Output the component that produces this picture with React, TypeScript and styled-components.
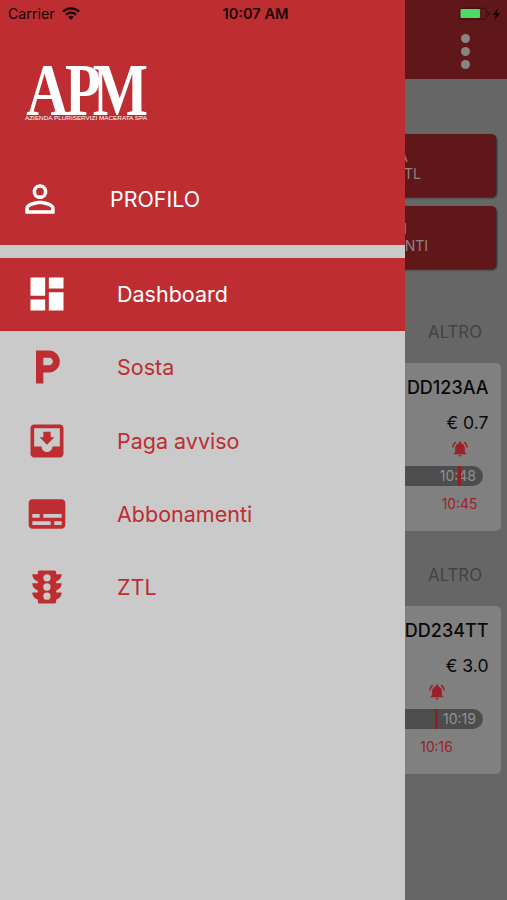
import React from 'react';
import styled, { createGlobalStyle } from 'styled-components';
import {
  MdDashboard, MdLocalParking, MdMoveToInbox,
  MdPersonOutline, MdSubtitles, MdTraffic,
} from 'react-icons/md';

const red = '#bd2d31';
const darkRed = '#5f171a';

const GlobalStyle = createGlobalStyle`
  * { box-sizing: border-box; }
  body { margin: 0; font-family: Inter, "Liberation Sans", sans-serif; background: #666; }
`;

const Screen = styled.div`
  position: relative;
  width: 507px;
  height: 900px;
  overflow: hidden;
  background: #666;
`;

const Page = styled.main`
  display: flex;
  flex-direction: column;
  height: 100%;
`;

const AppBar = styled.header`
  height: 79px;
  flex: none;
  display: flex;
  justify-content: flex-end;
  padding: 34px 37px 0 0;
  background: ${darkRed};
`;

const MoreDots = styled.div`
  display: flex;
  flex-direction: column;
  gap: 4px;
  i { width: 9px; height: 9px; border-radius: 50%; background: #888583; }
`;

const Actions = styled.section`
  display: flex;
  flex-direction: column;
  gap: 9px;
  padding: 55px 11px 0 300px;
`;

const ActionButton = styled.button`
  height: 63px;
  display: flex;
  flex-direction: column;
  align-items: flex-end;
  justify-content: center;
  padding: 0 0 1px;
  border: 0;
  border-radius: 5px;
  background: ${darkRed};
  box-shadow: 1px 1px 2px rgba(0, 0, 0, 0.65);
  color: #918383;
  font: 400 14px/17px Inter, sans-serif;
`;

const ActionLine = styled.span<{ $end: number }>`
  margin-right: ${p => p.$end}px;
`;

const SectionTitle = styled.h2<{ $top: number }>`
  margin: ${p => p.$top}px 25px 0 0;
  height: 20px;
  text-align: right;
  font-size: 16.8px;
  line-height: 20px;
  font-weight: 400;
  color: #434343;
`;

const Card = styled.article`
  width: 350px;
  height: 168px;
  margin: 21px 6px 0 auto;
  padding: 13px 12.5px 0 0;
  border-radius: 5px;
  background: #808080;
  color: #090909;
  text-align: right;
`;

const Plate = styled.div`
  font-size: 18px;
  line-height: 24px;
  font-weight: 500;
`;

const Price = styled.div`
  margin-top: 12px;
  font-size: 17.6px;
  line-height: 22px;
`;

const Marked = styled.div<{ $right: number; $top: number }>`
  display: flex;
  justify-content: center;
  width: 50px;
  height: 19px;
  margin: ${p => p.$top}px ${p => p.$right}px 0 auto;
  color: #9a2029;
  font-size: 13.8px;
  line-height: 19px;
`;

const Track = styled.div`
  position: relative;
  height: 20px;
  margin: 7px 5.5px 0 0;
  padding-right: 7px;
  border-radius: 10px;
  background: #4d4d4d;
  color: #929292;
  font-size: 14px;
  line-height: 20px;
`;

const Tick = styled.i<{ $right: number }>`
  position: absolute;
  top: 0;
  right: ${p => p.$right}px;
  width: 3px;
  height: 20px;
  background: #971b21;
`;

const Drawer = styled.aside`
  position: absolute;
  inset: 0 auto 0 0;
  width: 405px;
  background: #cacaca;
`;

const DrawerHeader = styled.header`
  height: 245px;
  padding: 61px 0 0 24px;
  background: ${red};
  color: #fff;
`;

const Logo = styled.svg`
  display: block;
  width: 126px;
  height: 61px;
  overflow: visible;
`;

const Profile = styled.div`
  display: flex;
  align-items: center;
  height: 44px;
  margin: 55px 0 0 -6.5px;
  font-size: 21.4px;
  span { margin-left: 48.5px; }
`;

const Menu = styled.nav`
  display: flex;
  flex-direction: column;
  padding-top: 13px;
`;

const MenuItem = styled.a<{ $active?: boolean }>`
  display: flex;
  align-items: center;
  height: 73.3px;
  padding: 0 0 1px 24.5px;
  background: ${p => (p.$active ? red : 'transparent')};
  color: ${p => (p.$active ? '#fff' : red)};
  font-size: 21.5px;
  line-height: 28px;
`;

const MenuLabel = styled.span`
  margin-left: 48.5px;
`;

const StatusBar = styled.div`
  position: absolute;
  inset: 0 0 auto;
  height: 27px;
  display: grid;
  grid-template-columns: 1fr auto 1fr;
  align-items: center;
  padding: 0 6px 0 8px;
  color: #180506;
  font-size: 14.2px;
`;

const Carrier = styled.div`
  display: flex;
  align-items: center;
  gap: 7px;
`;

const Clock = styled.time`
  margin-left: 2px;
  font-size: 14.6px;
  font-weight: 600;
`;

const Battery = styled.svg`
  justify-self: end;
`;

function BellRing() {
  return (
    <svg width="18" height="18" viewBox="0 0 23 24" fill="currentColor">
      <path d="M11.500 22c.14 0 .27 0 .4-.04.65-.14 1.190-.58 1.440-1.180.1-.24.16-.51.16-.78h-4a2 2 0 0 0 2 2M18 10.500c0-3.070-2.140-5.640-5-6.320V3.500a1.500 1.500 0 0 0-3 0v.68c-2.870.68-5 3.250-5 6.320V16l-2 2v1h17v-1l-2-2M19.970 10h2c-.15-3.210-1.730-6.030-4.120-7.850l-1.430 1.430C18.460 5 19.820 7.350 19.970 10M6.580 3.580L5.150 2.150C2.760 3.970 1.180 6.790 1 10h2c.18-2.650 1.540-5 3.580-6.420z" />
    </svg>
  );
}

interface Session { plate: string; price: string; end: string; alarm: string; mark: number; }

const sessions: Session[] = [
  { plate: 'DD123AA', price: '€ 0.7', end: '10:48', alarm: '10:45', mark: 4 },
  { plate: 'DD234TT', price: '€ 3.0', end: '10:19', alarm: '10:16', mark: 27 },
];

const menu = [
  { label: 'Dashboard', Icon: MdDashboard, active: true },
  { label: 'Sosta', Icon: MdLocalParking },
  { label: 'Paga avviso', Icon: MdMoveToInbox },
  { label: 'Abbonamenti', Icon: MdSubtitles },
  { label: 'ZTL', Icon: MdTraffic },
];

export default function App() {
  return (
    <Screen>
      <GlobalStyle />
      <Page>
        <AppBar><MoreDots><i /><i /><i /></MoreDots></AppBar>
        <Actions>
          <ActionButton><ActionLine $end={88}>A</ActionLine><ActionLine $end={75}>ZTL</ActionLine></ActionButton>
          <ActionButton><ActionLine $end={89}>I</ActionLine><ActionLine $end={68}>ABBONAMENTI</ActionLine></ActionButton>
        </Actions>
        {sessions.map((s, i) => (
          <React.Fragment key={s.plate}>
            <SectionTitle $top={i === 0 ? 53 : 34}>ALTRO</SectionTitle>
            <Card>
              <Plate>{s.plate}</Plate>
              <Price>{s.price}</Price>
              <Marked $right={s.mark} $top={6}><BellRing /></Marked>
              <Track>{s.end}<Tick $right={s.mark + 18} /></Track>
              <Marked $right={s.mark} $top={9}>{s.alarm}</Marked>
            </Card>
          </React.Fragment>
        ))}
      </Page>
      <Drawer>
        <DrawerHeader>
          <Logo viewBox="0 0 126 61" fill="#fff" fontFamily="Liberation Serif, serif">
            <text transform="scale(.78 1)" x="3 52.500 88" y="53.500" fontSize="75" fontWeight="700">APM</text>
            <text x="1" y="58.500" fontSize="5.800" fontFamily="Liberation Sans, sans-serif" textLength="122" lengthAdjust="spacingAndGlyphs">AZIENDA PLURISERVIZI MACERATA SPA</text>
          </Logo>
          <Profile><MdPersonOutline size={44} /><span>PROFILO</span></Profile>
        </DrawerHeader>
        <Menu>
          {menu.map(({ label, Icon, active }) => (
            <MenuItem key={label} $active={active}>
              <Icon size={44} /><MenuLabel>{label}</MenuLabel>
            </MenuItem>
          ))}
        </Menu>
      </Drawer>
      <StatusBar>
        <Carrier>
          Carrier
          <svg width="18" height="13" viewBox="0 0 18 13" fill="none" stroke="#180506" strokeWidth="2.3">
            <path d="M1 4.7a11.3 11.3 0 0 1 16 0M4 7.8a7 7 0 0 1 10 0" />
            <path d="M6.2 10a4 4 0 0 1 5.6 0L9 12.7z" fill="#180506" stroke="none" />
          </svg>
        </Carrier>
        <Clock>10:07 AM</Clock>
        <Battery width="42" height="14" viewBox="0 0 42 14">
          <rect x="0.7" y="1.2" width="27" height="11" rx="2.5" fill="none" stroke="#3b0e10" />
          <rect x="1.5" y="2" width="19.5" height="9" rx="1" fill="#4cd964" />
          <path d="M29 5c2 .5 2 3.5 0 4z" fill="#3b0e10" />
          <path d="M38.5 1.5L34 8h3l-1.5 5L41 6.3h-3.3z" fill="#0b0303" />
        </Battery>
      </StatusBar>
    </Screen>
  );
}
